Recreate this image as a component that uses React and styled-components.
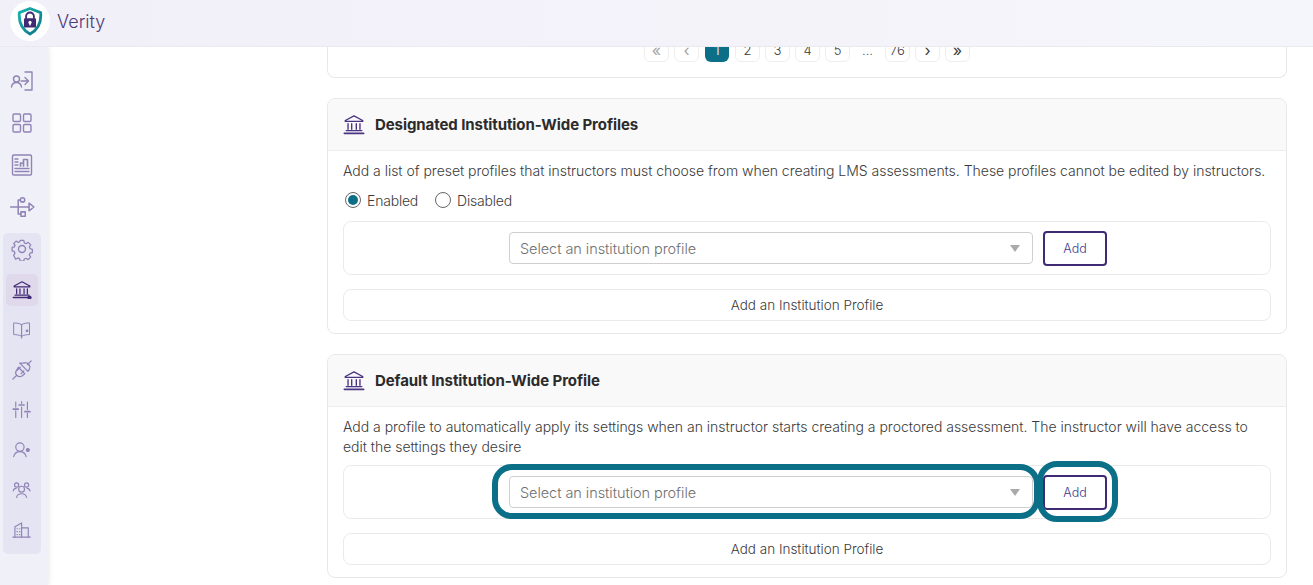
import React from "react";
import styled, { createGlobalStyle } from "styled-components";

const Global = createGlobalStyle`
  html, body { margin: 0; padding: 0; height: 100%; overflow: hidden; background: #fff; }
  * { box-sizing: border-box; }
  body { font-family: Inter, "Noto Sans", sans-serif; color: #3a3a3a; }
`;

const Page = styled.div`display:flex;flex-direction:column;height:585px;width:1313px;overflow:hidden;`;
const Header = styled.header`
  height:47px;flex:none;display:flex;align-items:center;padding:0 0 4px 10px;gap:7px;
  background:linear-gradient(90deg,#f1eff8 0%,#f4f3fa 60%,#f5f6fb 100%);
  border-bottom:1px solid #e9e9ee;position:relative;z-index:2;
`;
const LogoCircle = styled.div`width:40px;height:40px;border-radius:50%;background:#fff;display:flex;align-items:center;justify-content:center;`;
const Brand = styled.span`font-size:18px;font-weight:300;color:#4b3b7c;`;
const Body = styled.div`flex:1;display:flex;min-height:0;`;
const Sidebar = styled.nav`
  width:48px;flex:none;background:#f0f1f8;box-shadow:1px 0 5px rgba(60,60,90,.12);
  padding:13px 0 0 3px;display:flex;flex-direction:column;align-items:stretch;
`;
const Item = styled.div`
  height:${p=>p.$h||42}px;width:${p=>p.$narrow?32:38}px;flex:none;display:flex;align-items:center;justify-content:center;
  color:${p=>p.$active?"#3f2a73":"#9183b5"};
  background:${p=>p.$active?"#e0d9ec":"transparent"};
  border-radius:5px;
  margin:${p=>p.$active?"9px 3px 4px":"0"};
`;
const Group = styled.div`margin-top:5px;width:38px;height:321px;background:#e4e4f3;border-radius:5px;display:flex;flex-direction:column;`;
const Main = styled.main`flex:1;padding-left:279px;padding-right:26px;display:flex;flex-direction:column;gap:20px;min-width:0;overflow:hidden;`;
const PagerCard = styled.section`
  height:31px;flex:none;display:flex;justify-content:center;align-items:flex-end;gap:5px;padding-bottom:15px;overflow:hidden;
  border:1px solid #e8e8e8;border-top:0;border-radius:0 0 8px 8px;
`;
const PageBtn = styled.span`
  width:${p=>p.$active?24:25}px;height:24px;flex:none;display:flex;align-items:center;justify-content:center;
  font-size:${p=>p.$glyph?16:13}px;font-weight:${p=>p.$glyph?400:300};border-radius:6px;
  margin:${p=>p.$active?"0 1px 0 1px":"0"};
  background:${p=>p.$active?"#0b7087":"transparent"};
  color:${p=>p.$active?"#fff":p.$muted?"#a5a5a5":"#3a3a3a"};
  border:${p=>p.$active||p.$bare?"0":"1px solid #eee"};
`;
const Card = styled.section`
  flex:none;border:1px solid #e8e8e8;border-radius:8px;overflow:hidden;
`;
const CardHead = styled.div`
  height:52px;display:flex;align-items:center;gap:10px;padding-left:15px;background:#f9f9f9;border-bottom:1px solid #ededed;color:#4b3384;
`;
const Title = styled.h2`margin:0;font-size:15px;font-weight:700;color:#2b2b2b;letter-spacing:-.08px;`;
const CardBody = styled.div`padding:10px 15px 12px;`;
const Desc = styled.p`margin:0;font-size:14px;line-height:20px;font-weight:300;letter-spacing:-.02px;color:#3a3a3a;`;
const Radios = styled.div`display:flex;align-items:center;gap:17px;margin-top:9px;height:20px;padding-left:2px;`;
const RadioLabel = styled.label`display:flex;align-items:center;gap:6px;font-size:14px;font-weight:300;letter-spacing:-.2px;`;
const RadioDot = styled.span`
  width:16px;height:16px;border-radius:50%;border:1px solid #666;display:flex;align-items:center;justify-content:center;
  &::after{content:"";width:10px;height:10px;border-radius:50%;background:${p=>p.$on?"#0b7087":"transparent"};}
`;
const SelectRow = styled.div`
  margin-top:${p=>p.$mt}px;height:54px;border:1px solid #eaeaea;border-radius:8px;display:flex;align-items:center;justify-content:center;gap:10px;padding-left:2px;
`;
const Highlight = styled.div`
  position:relative;flex:none;
  &::after{content:"";position:absolute;pointer-events:none;border:6px solid #0b7087;
    inset:${p=>p.$inset};border-radius:${p=>p.$r}px;}
`;
const Select = styled.div`
  width:524px;height:32px;border:1px solid #cfcfcf;border-radius:4px;display:flex;align-items:center;justify-content:space-between;
  padding:0 12px 0 10px;font-size:14.5px;font-weight:300;letter-spacing:-.06px;color:#6f6f6f;
  &::after{content:"";border-left:5px solid transparent;border-right:5px solid transparent;border-top:7px solid #aaa;}
`;
const AddBtn = styled.button`
  width:64px;height:35px;border:2px solid #3f2a73;border-radius:4px;background:#fff;font:300 12.5px Inter,sans-serif;color:#3b3a8f;padding:0;
`;
const WideBtn = styled.button`
  display:block;width:100%;height:32px;margin-top:14px;border:1px solid #eaeaea;border-radius:8px;background:#fff;font:300 13.5px Inter,sans-serif;color:#3a3a3a;padding:0;
`;

const Ico = ({children,s=24})=>(
  <svg width={s} height={s} viewBox="0 0 24 24" fill="none" stroke="currentColor" strokeWidth="1.4" strokeLinecap="round" strokeLinejoin="round">{children}</svg>
);
const Bank = ({w=22,h=20,dot})=>(
  <svg width={w} height={h} viewBox="0 2.500 24 21.800" fill="none" stroke="currentColor" strokeWidth="1.5" strokeLinecap="round" strokeLinejoin="round">
    <path d="M2.500 8.500 12 3.500l9.500 5v1h-19z"/><path d="M5.500 12v6M9.500 12v6M14.500 12v6M18.500 12v6"/><path d="M3.500 19.500h17"/><path d="M1.500 22.500h21" strokeWidth="1.900"/>
    {dot && <circle cx="21" cy="22.500" r="1.800" fill="currentColor"/>}
  </svg>
);
const Icons = {
  login:<Ico><circle cx="6.500" cy="10" r="3"/><path d="M1.500 18c.5-3 2.500-4.500 5-4.500s4.500 1.500 5 4.500"/><path d="M11 12h7M15 8.500l3.500 3.500-3.500 3.500"/><path d="M15 3h7v18h-7"/></Ico>,
  grid:<Ico><rect x="3" y="3" width="7.500" height="7.500" rx="1.200"/><rect x="13.500" y="3" width="7.500" height="7.500" rx="1.200"/><rect x="3" y="13.500" width="7.500" height="7.500" rx="1.200"/><rect x="13.500" y="13.500" width="7.500" height="7.500" rx="1.200"/></Ico>,
  report:<Ico><rect x="2.500" y="2" width="19" height="20" rx="1.200"/><path d="M5 6h3M5 9h3M5 12h3M5 15.500h14M5 18.500h14"/><path d="M10.500 13v-3h3v3M13.500 13V6.500h4V13" strokeWidth="1.700"/></Ico>,
  usb:<Ico s={26}><path d="M1.500 12h17"/><path d="M18.500 8.500v7l4.500-3.500z"/><circle cx="12.500" cy="5.500" r="2"/><rect x="11" y="16.500" width="4" height="4"/><path d="M10.500 5.500H8.500v6.500M11 18.500H8.500V12"/></Ico>,
  gear:<Ico s={24}><circle cx="12" cy="12" r="3.500"/><path d="M10 2.500h4l.6 2.800 1.900.8 2.400-1.500 2.800 2.800-1.500 2.400.8 1.900 2.500.6v3.800l-2.600.6-.8 1.900 1.500 2.400-2.800 2.800-2.400-1.500-1.900.8-.6 2.300h-4l-.6-2.700-1.900-.8-2.400 1.500L2.700 19l1.500-2.400-.8-1.900-2.400-.6v-3.800l2.500-.6.8-1.900L2.700 6l2.800-2.800L7.900 4.700l1.500-.7z" transform="translate(1.200 1.200) scale(.9)"/></Ico>,
  book:<Ico s={20}><path d="M11.500 5.500C9 4 5 3.500 2 3.500v14c3 0 7 .5 9.500 2 2.500-1.500 6.500-2 9.500-2v-14c-3 0-7 .500-9.500 2z" strokeWidth="1.200"/><path d="M11.500 5.500v16"/><circle cx="18" cy="13" r="1"/></Ico>,
  plug:<Ico s={22}><path d="M2 22l4-4M18 6l4-4"/><path d="M8 9l7 7-3 2.500c-2 1.200-4 .8-5.500-.5s-1.800-3.500-.5-5.500z"/><path d="M9.500 5.500l9 9 1.500-2.500c1-2 .500-4-1-5.500S16 4.500 14 5.500z" transform="translate(0 -1)"/><path d="M7 12l3-3M11 16l3-3"/></Ico>,
  sliders:<Ico s={20}><path d="M4.500 2.500v6M4.500 13v8M11.500 2v2M11.500 8.500V21M18.500 2.500v9M18.500 16v5"/><path d="M1.500 11h6M8.500 6h6M15.500 14h6" strokeWidth="2"/></Ico>,
  userDot:<Ico s={20}><circle cx="9.500" cy="8.500" r="5"/><path d="M2 20c1-4 4-6 7.500-6s6.500 2 7.500 6"/><circle cx="19" cy="12" r="1.800" fill="currentColor"/></Ico>,
  users:<Ico s={20}><circle cx="11.500" cy="11" r="3.500"/><path d="M5.500 21c.5-3 3-4.500 6-4.500s5.500 1.500 6 4.500"/><circle cx="5.500" cy="6" r="2.500"/><circle cx="17.500" cy="6" r="2.500"/><path d="M1.500 13c.3-1.800 1.500-3 3.500-3M21.500 13c-.3-1.800-1.500-3-3.500-3"/></Ico>,
  building:<Ico s={20}><path d="M1 20.500h21"/><path d="M3.500 20.500V8l8-4.500v17M11.500 9.500h8v11"/><path d="M6 10.500h.5M9 10.500h.5M6 14h.5M9 14h.5M6 17.500h.5M9 17.500h.5"/></Ico>,
};
const Logo = ()=>(
  <svg width="26" height="30" viewBox="0 0 28 32">
    <defs><linearGradient id="sg" x1="0" y1="0" x2="1" y2="1"><stop offset="0" stopColor="#19b5ae"/><stop offset="1" stopColor="#0d7488"/></linearGradient></defs>
    <path d="M14 2.500 25.500 7c.8 9.500-1.500 17.500-11.500 23C4 24.500 1.700 16.500 2.500 7z" fill="#fff" stroke="url(#sg)" strokeWidth="3" strokeLinejoin="round"/>
    <path d="M9.800 13.500V11a4.200 4.200 0 0 1 8.400 0v2.500" fill="none" stroke="#3f2a73" strokeWidth="2"/>
    <rect x="7.500" y="13" width="13" height="10" rx="1.300" fill="#3f2a73"/>
    <circle cx="14" cy="17.500" r="1.700" fill="#fff"/><rect x="13.200" y="17.500" width="1.600" height="3.200" fill="#fff"/>
  </svg>
);
const Pages=[["«",1,0,0,1],["‹",1,0,0,1],["1",0,1],["2"],["3"],["4"],["5"],["...",0,0,1],["76"],["›",0,0,0,1],["»",0,0,0,1]];

const SelectBlock = ({highlight,mt})=>{
  const sel=<Select>Select an institution profile</Select>;
  const add=<AddBtn>Add</AddBtn>;
  return (
    <SelectRow $mt={mt}>
      {highlight?<Highlight $inset="-12px -7px -11px -17px" $r={20}>{sel}</Highlight>:sel}
      {highlight?<Highlight $inset="-14px -11px -12px -6px" $r={20}>{add}</Highlight>:add}
    </SelectRow>
  );
};

export default function App(){
  return (
    <Page>
      <Global/>
      <Header><LogoCircle><Logo/></LogoCircle><Brand>Verity</Brand></Header>
      <Body>
        <Sidebar>
          <Item>{Icons.login}</Item>
          <Item>{Icons.grid}</Item>
          <Item>{Icons.report}</Item>
          <Item>{Icons.usb}</Item>
          <Group>
            <Item $h={32}>{Icons.gear}</Item>
            <Item $h={32} $narrow $active><Bank w={20} h={18} dot/></Item>
            <Item $h={40}>{Icons.book}</Item>
            <Item $h={40}>{Icons.plug}</Item>
            <Item $h={40}>{Icons.sliders}</Item>
            <Item $h={40}>{Icons.userDot}</Item>
            <Item $h={40}>{Icons.users}</Item>
            <Item $h={40}>{Icons.building}</Item>
          </Group>
        </Sidebar>
        <Main>
          <PagerCard>
            {Pages.map(([t,m,a,b,g],i)=><PageBtn key={i} $muted={m} $active={a} $bare={b} $glyph={g}>{t}</PageBtn>)}
          </PagerCard>
          <Card>
            <CardHead><Bank/><Title>Designated Institution-Wide Profiles</Title></CardHead>
            <CardBody>
              <Desc>Add a list of preset profiles that instructors must choose from when creating LMS assessments. These profiles cannot be edited by instructors.</Desc>
              <Radios>
                <RadioLabel><RadioDot $on/>Enabled</RadioLabel>
                <RadioLabel><RadioDot/>Disabled</RadioLabel>
              </Radios>
              <SelectBlock mt={11}/>
              <WideBtn>Add an Institution Profile</WideBtn>
            </CardBody>
          </Card>
          <Card>
            <CardHead><Bank/><Title>Default Institution-Wide Profile</Title></CardHead>
            <CardBody>
              <Desc>Add a profile to automatically apply its settings when an instructor starts creating a proctored assessment. The instructor will have access to edit the settings they desire</Desc>
              <SelectBlock highlight mt={8}/>
              <WideBtn>Add an Institution Profile</WideBtn>
            </CardBody>
          </Card>
        </Main>
      </Body>
    </Page>
  );
}
